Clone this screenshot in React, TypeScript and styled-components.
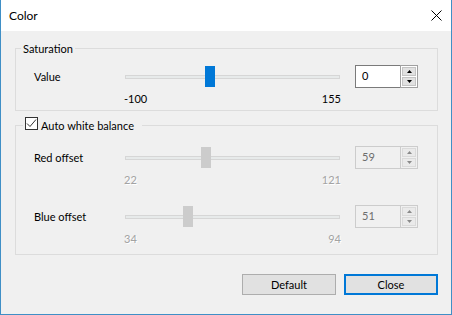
import React from 'react';
import styled, { createGlobalStyle } from 'styled-components';

const Global = createGlobalStyle`
  html, body { margin: 0; padding: 0; background: #ffffff; }
  body { font-family: Lato, "Noto Sans", sans-serif; font-size: 11px; color: #000; }
  * { box-sizing: border-box; }
`;

const Window = styled.div`
  width: 452px;
  height: 315px;
  border: 1px solid #3f8fc6;
  border-top: none;
  display: flex;
  flex-direction: column;
  background: #f0f0f0;
`;

const TitleBar = styled.div`
  height: 31px;
  flex: none;
  background: #ffffff;
  display: flex;
  align-items: center;
  justify-content: space-between;
  padding: 0 9px 0 8px;
`;

const Title = styled.span`
  font-size: 12px;
  line-height: 15px;
`;

const CloseX = styled.svg`
  width: 11px;
  height: 11px;
  display: block;
`;

const Body = styled.div`
  flex: 1;
  display: flex;
  flex-direction: column;
  padding: 0 13px 0 14px;
`;

const Group = styled.fieldset<{ $mt: number }>`
  margin: ${p => p.$mt}px 0 0 0;
  padding: 0;
  border: 1px solid #dcdcdc;
  min-width: 0;
`;

const Legend = styled.legend<{ $ml: number; $pr: number }>`
  margin-left: ${p => p.$ml}px;
  padding: 0 ${p => p.$pr}px 0 2px;
  height: 15px;
  line-height: 15px;
`;

const LegendInner = styled.span`
  display: flex;
  align-items: flex-start;
  height: 15px;
`;

const CheckBox = styled.span`
  width: 13px;
  height: 13px;
  margin-top: -1px;
  margin-right: 3px;
  border: 1px solid #333333;
  background: #ffffff;
  display: flex;
  align-items: center;
  justify-content: center;
`;

const Rows = styled.div<{ $pt: number; $pb: number }>`
  display: flex;
  flex-direction: column;
  gap: 18px;
  padding: ${p => p.$pt}px 0 ${p => p.$pb}px 18px;
`;

const Row = styled.div`
  display: grid;
  grid-template-columns: 76px 217px 63px;
  column-gap: 14px;
  align-items: start;
`;

const RowLabel = styled.div`
  height: 23px;
  line-height: 23px;
`;

const SliderCol = styled.div`
  display: flex;
  flex-direction: column;
`;

const SliderArea = styled.div`
  position: relative;
  height: 23px;
`;

const Track = styled.div`
  margin: 10px 0 0 1px;
  width: 215px;
  height: 4px;
  border: 1px solid #d6d6d6;
  background: #e7eaea;
`;

const Thumb = styled.div<{ $disabled?: boolean }>`
  position: absolute;
  top: 1px;
  width: 10px;
  height: 21px;
  background: ${p => (p.$disabled ? '#cccccc' : '#0078d7')};
`;

const Ticks = styled.div<{ $disabled?: boolean }>`
  margin-top: 3px;
  display: flex;
  justify-content: space-between;
  line-height: 15px;
  color: ${p => (p.$disabled ? '#a3a3a3' : '#000000')};
  text-shadow: ${p => (p.$disabled ? '1px 1px 0 #ffffff' : 'none')};
`;

const Spin = styled.div`
  display: flex;
  height: 23px;
`;

const Edit = styled.div<{ $disabled?: boolean }>`
  width: 45px;
  height: 23px;
  border: 1px solid ${p => (p.$disabled ? '#cccccc' : '#7a7a7a')};
  border-right: none;
  background: ${p => (p.$disabled ? '#f0f0f0' : '#ffffff')};
  color: ${p => (p.$disabled ? '#6d6d6d' : '#000000')};
  padding-left: 6px;
  line-height: 19px;
`;

const SpinCol = styled.div<{ $disabled?: boolean }>`
  width: 18px;
  height: 23px;
  border: 1px solid ${p => (p.$disabled ? '#cccccc' : '#a0a0a0')};
  padding: 1px;
  display: flex;
  flex-direction: column;
  gap: 1px;
  background: ${p => (p.$disabled ? '#f0f0f0' : '#ffffff')};
`;

const SpinBtn = styled.div<{ $disabled?: boolean }>`
  flex: 1;
  border: 1px solid ${p => (p.$disabled ? '#dadada' : '#c4c4c4')};
  background: ${p => (p.$disabled ? '#eaeaea' : '#e1e1e1')};
  display: flex;
  align-items: center;
  justify-content: center;
`;

const Footer = styled.div`
  display: flex;
  justify-content: flex-end;
  gap: 8px;
  margin-top: 19px;
`;

const Button = styled.div<{ $default?: boolean }>`
  width: 94px;
  height: 21px;
  display: flex;
  align-items: center;
  justify-content: center;
  background: #e1e1e1;
  border: ${p => (p.$default ? '2px solid #0078d7' : '1px solid #adadad')};
`;

const Arrow = ({ up, color }: { up: boolean; color: string }) => (
  <svg width="5" height="3" viewBox="0 0 5 3" style={{ display: 'block' }}>
    <polygon points={up ? '2.5,0 5,3 0,3' : '0,0 5,0 2.5,3'} fill={color} />
  </svg>
);

type SliderRowProps = {
  label: string;
  min: number;
  max: number;
  value: number;
  disabled?: boolean;
};

const SliderRow = ({ label, min, max, value, disabled }: SliderRowProps) => {
  const f = (value - min) / (max - min);
  const left = Math.round(1.5 + f * 203);
  const arrowColor = disabled ? '#8a8a8a' : '#000000';
  return (
    <Row>
      <RowLabel>{label}</RowLabel>
      <SliderCol>
        <SliderArea>
          <Track />
          <Thumb $disabled={disabled} style={{ left }} />
        </SliderArea>
        <Ticks $disabled={disabled}>
          <span>{min}</span>
          <span>{max}</span>
        </Ticks>
      </SliderCol>
      <Spin>
        <Edit $disabled={disabled}>{value}</Edit>
        <SpinCol $disabled={disabled}>
          <SpinBtn $disabled={disabled}>
            <Arrow up color={arrowColor} />
          </SpinBtn>
          <SpinBtn $disabled={disabled}>
            <Arrow up={false} color={arrowColor} />
          </SpinBtn>
        </SpinCol>
      </Spin>
    </Row>
  );
};

export default function App() {
  return (
    <>
      <Global />
      <Window>
        <TitleBar>
          <Title>Color</Title>
          <CloseX viewBox="0 0 11 11">
            <path d="M0.5 0.5 L10.5 10.5 M10.5 0.5 L0.5 10.5" stroke="#000" strokeWidth="1" />
          </CloseX>
        </TitleBar>
        <Body>
          <Group $mt={10}>
            <Legend $ml={5} $pr={2}>Saturation</Legend>
            <Rows $pt={9} $pb={4}>
              <SliderRow label="Value" min={-100} max={155} value={0} />
            </Rows>
          </Group>
          <Group $mt={7}>
            <Legend $ml={7} $pr={8}>
              <LegendInner>
                <CheckBox>
                  <svg width="11" height="11" viewBox="0 0 11 11">
                    <polyline points="1,5.5 4,8.5 10,1.5" fill="none" stroke="#333" strokeWidth="1" />
                  </svg>
                </CheckBox>
                Auto white balance
              </LegendInner>
            </Legend>
            <Rows $pt={13} $pb={8}>
              <SliderRow label="Red offset" min={22} max={121} value={59} disabled />
              <SliderRow label="Blue offset" min={34} max={94} value={51} disabled />
            </Rows>
          </Group>
          <Footer>
            <Button>Default</Button>
            <Button $default>Close</Button>
          </Footer>
        </Body>
      </Window>
    </>
  );
}
